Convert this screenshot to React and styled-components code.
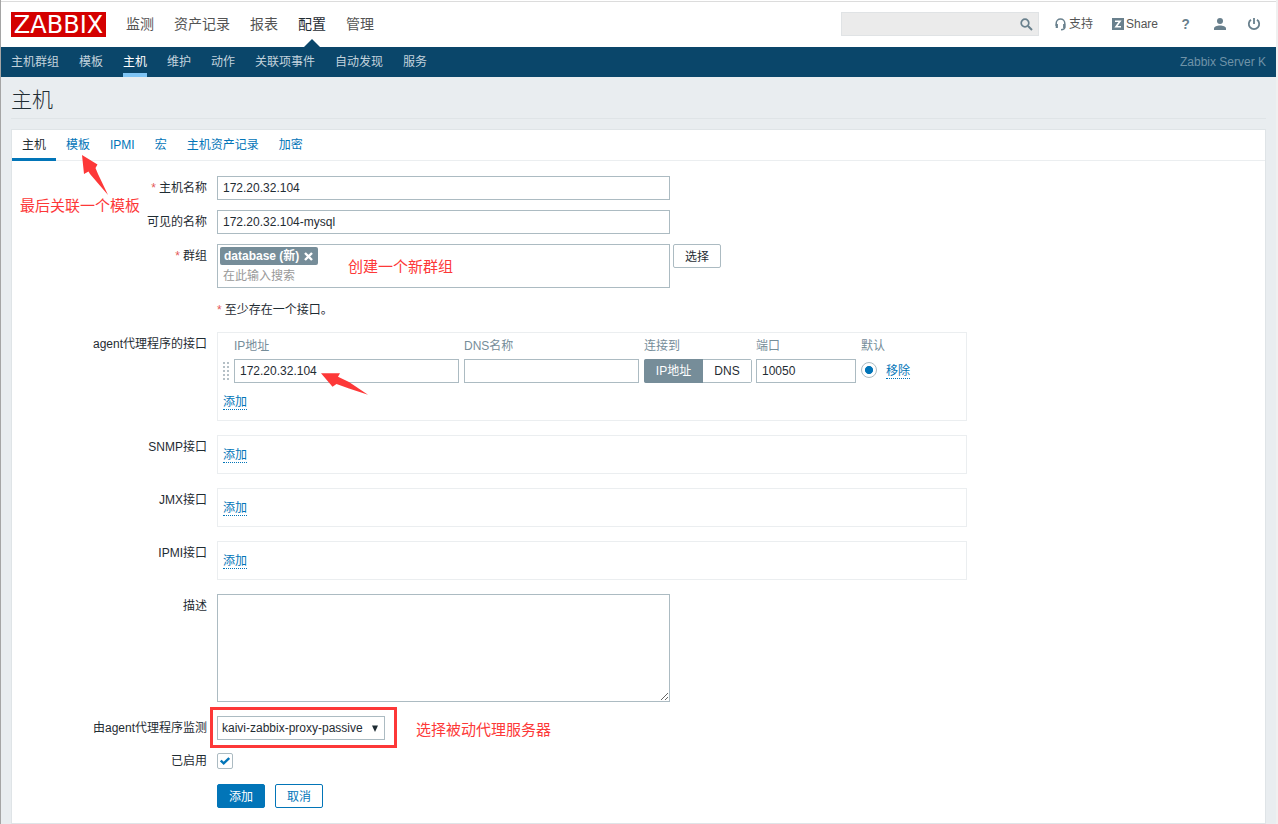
import React from 'react'
import styled, { createGlobalStyle } from 'styled-components'

const GlobalStyle = createGlobalStyle`
  * {
    box-sizing: border-box;
  }
  body {
    margin: 0;
    background: #e9edf0;
    color: #1f2c33;
    font-family: "Liberation Sans", "Noto Sans CJK SC", sans-serif;
    font-size: 12px;
  }
  input, textarea, button {
    font-family: inherit;
    font-size: 12px;
    color: #1f2c33;
  }
`

const Page = styled.div`
  position: relative;
  height: 824px;
  overflow: hidden;
  border-left: 1px solid #a5a5a5;
  border-right: 2px solid #f0f0f0;
`

const Header = styled.header`
  display: flex;
  align-items: flex-start;
  height: 47px;
  padding: 2px 15px 0 10px;
  background: #fff;
  box-shadow: inset 0 1px #fff, inset 0 2px #dcdcdc;
`

const Logo = styled.div`
  width: 95px;
  height: 25px;
  margin: 10px 20px 0 0;
  background: #d40000;
  color: #fff;
  font-family: "DejaVu Sans", sans-serif;
  font-size: 24px;
  line-height: 26px;
  text-align: center;
`

const MainNav = styled.nav`
  display: flex;
  gap: 20px;
  height: 45px;
`

const MainItem = styled.a`
  position: relative;
  font-size: 14px;
  line-height: 44px;
  color: ${props => props.$active ? '#1f2c33' : '#545454'};
  &::after {
    content: '';
    display: ${props => props.$active ? 'block' : 'none'};
    position: absolute;
    left: 6px;
    bottom: 0;
    border: 8px solid transparent;
    border-top: 0;
    border-bottom-color: #0a466a;
  }
`

const Search = styled.div`
  display: flex;
  align-items: center;
  justify-content: flex-end;
  width: 198px;
  height: 24px;
  margin: 10px 0 0 auto;
  padding-right: 5px;
  background: #ebebeb;
  border: 1px solid #e0e3e5;
`

const HeaderLink = styled.a`
  display: flex;
  align-items: center;
  gap: ${props => props.$gap || '3px'};
  height: 24px;
  margin: 10px 0 0 ${props => props.$space};
  color: #545454;
  line-height: 20px;
`

const ShareMark = styled.span`
  display: flex;
  width: 12px;
  height: 12px;
`

const Help = styled.span`
  width: 8px;
  color: #69808d;
  font-size: 15px;
  font-weight: bold;
  transform: scaleX(0.9);
`

const SubNav = styled.nav`
  display: flex;
  gap: 20px;
  height: 30px;
  padding: 0 10px;
  background: #0a466a;
`

const SubItem = styled.a`
  color: ${props => props.$active ? '#fff' : '#c3d3dd'};
  line-height: 31px;
  border-bottom: 4px solid ${props => props.$active ? '#7fc4f4' : 'transparent'};
  height: 30px;
`

const ServerName = styled.span`
  margin-left: auto;
  color: #6f93a8;
  line-height: 30px;
`

const Title = styled.h1`
  margin: 0 10px 10px;
  height: 42px;
  border-bottom: 1px solid #dfe4e7;
  font-size: 21px;
  font-weight: 300;
  font-family: "Noto Sans CJK SC", sans-serif;
  line-height: 43px;
`

const Panel = styled.main`
  margin: 0 10px;
  height: 695px;
  background: #fff;
  border: 1px solid #dfe4e7;
`

const Tabs = styled.div`
  display: flex;
  height: 31px;
  border-bottom: 1px solid #ebeef0;
`

const Tab = styled.a`
  height: 31px;
  padding: 0 10px;
  line-height: 31px;
  color: ${props => props.$active ? '#1f2c33' : '#0275b8'};
  border-bottom: 3px solid ${props => props.$active ? '#0275b8' : 'transparent'};
`

const Form = styled.form`
  padding-top: 15px;
`

const Row = styled.div`
  display: flex;
  align-items: flex-start;
  margin-bottom: ${props => props.$bottom || '10px'};
`

const Label = styled.label`
  width: 195px;
  margin-right: 10px;
  line-height: 24px;
  text-align: right;
`

const Star = styled.span`
  color: #e45959;
  margin-right: 3px;
`

const Input = styled.input`
  display: block;
  width: ${props => props.$width || '453px'};
  height: 24px;
  padding: 0 5px;
  border: 1px solid #acbbc2;
  outline: none;
`

const MultiSelect = styled.div`
  width: 453px;
  height: 44px;
  margin-right: 3px;
  padding: 2px;
  border: 1px solid #acbbc2;
`

const Chip = styled.span`
  display: flex;
  align-items: center;
  justify-content: space-between;
  width: 98px;
  height: 18px;
  padding: 0 5px 0 4px;
  border-radius: 2px;
  background: #768d99;
  color: #fff;
  font-weight: bold;
  line-height: 18px;
  white-space: nowrap;
`

const Placeholder = styled.div`
  padding-left: 3px;
  color: #999;
  line-height: 23px;
`

const Note = styled.div`
  line-height: 24px;
`

const Button = styled.button`
  width: 48px;
  height: 24px;
  margin-right: ${props => props.$right || 0};
  padding: 2px 0 0;
  border: 1px solid ${props => props.$kind ? '#0275b8' : '#acbbc2'};
  border-radius: 2px;
  background: ${props => props.$kind === 'primary' ? '#0275b8' : '#fff'};
  color: ${props => props.$kind === 'primary' ? '#fff' : props.$kind ? '#0275b8' : '#1f2c33'};
  line-height: 20px;
`

const Box = styled.div`
  width: 750px;
  height: ${props => props.$tall ? '89px' : '39px'};
  padding: ${props => props.$tall ? '0 5px' : '10px 5px'};
  border: 1px solid #ebeef0;
`

const InterfaceGrid = styled.div`
  display: grid;
  grid-template-columns: 11px 230px 180px 112px 105px 25px auto;
  grid-template-rows: 26px 24px;
  margin-bottom: 10px;
`

const Head = styled.span`
  color: #768d99;
  line-height: 26px;
`

const Handle = styled.span`
  width: 6px;
  height: 18px;
  margin-top: 3px;
  background: conic-gradient(from 270deg at 2px 2px, #b5c0c6 90deg, transparent 0) 0 0 / 4px 4px;
`

const Segments = styled.div`
  display: flex;
  width: 108px;
  height: 24px;
  border: 1px solid #acbbc2;
  border-radius: 2px;
  line-height: 22px;
  text-align: center;
`

const Segment = styled.span`
  flex: ${props => props.$active ? '0 0 59px' : '1'};
  margin: ${props => props.$active ? '-1px 0 -1px -1px' : 0};
  line-height: ${props => props.$active ? '24px' : '22px'};
  border-radius: ${props => props.$active ? '2px 0 0 2px' : 0};
  background: ${props => props.$active ? '#768d99' : '#fff'};
  color: ${props => props.$active ? '#fff' : '#1f2c33'};
`

const Radio = styled.span`
  width: 16px;
  height: 16px;
  margin-top: 3px;
  border: 1px solid #acbbc2;
  border-radius: 50%;
  background: radial-gradient(circle, #0275b8 3.7px, #fff 4.4px);
`

const Link = styled.a`
  display: inline-block;
  height: ${props => props.$inCell ? '16px' : '17px'};
  margin-top: ${props => props.$inCell ? '4px' : '0'};
  justify-self: start;
  color: #0275b8;
  line-height: ${props => props.$inCell ? '17px' : '19px'};
  border-bottom: 1px dotted #0275b8;
`

const TextArea = styled.textarea`
  display: block;
  width: 453px;
  height: 108px;
  padding: 5px;
  border: 1px solid #acbbc2;
  outline: none;
`

const Select = styled.div`
  display: flex;
  align-items: center;
  justify-content: space-between;
  width: 168px;
  height: 24px;
  padding: 0 6px 0 4px;
  border: 1px solid #acbbc2;
`

const CheckBox = styled.span`
  display: flex;
  align-items: center;
  justify-content: center;
  width: 16px;
  height: 16px;
  margin-top: 4px;
  border: 1px solid #acbbc2;
  border-radius: 2px;
`

const Actions = styled.div`
  display: flex;
  padding-left: 205px;
`

// red notes lying over the form
const Mark = styled.span`
  position: absolute;
  left: ${props => props.$left}px;
  top: ${props => props.$top}px;
  color: #fd3838;
  font-size: 15px;
  line-height: 20px;
  white-space: nowrap;
`

const Frame = styled.div`
  position: absolute;
  left: 209px;
  top: 707px;
  width: 187px;
  height: 41px;
  border: 3px solid #fd3838;
`

const Arrow = styled.svg`
  position: absolute;
  left: ${props => props.$left}px;
  top: ${props => props.$top}px;
`

const mainItems = ['监测', '资产记录', '报表', '配置', '管理']
const subItems = ['主机群组', '模板', '主机', '维护', '动作', '关联项事件', '自动发现', '服务']
const tabs = ['主机', '模板', 'IPMI', '宏', '主机资产记录', '加密']

function TopBar() {
  return (
    <Header>
      <Logo>ZABBIX</Logo>
      <MainNav>
        {mainItems.map(item => (
          <MainItem key={item} $active={item === '配置'}>{item}</MainItem>
        ))}
      </MainNav>
      <Search>
        <svg width="13" height="13" viewBox="0 0 13 13" fill="none" stroke="#69808d">
          <circle cx="5" cy="5" r="3.8" strokeWidth="1.7" />
          <path d="M8 8l4 4" strokeWidth="2" />
        </svg>
      </Search>
      <HeaderLink $space="16px" $gap="3px">
        <svg width="11" height="13" viewBox="0 0 11 13" fill="none" stroke="#69808d">
          <path d="M1.2 8V5.300a4.300 4.300 0 0 1 8.600 0V9c0 1.800-1 2.700-3.800 2.700" strokeWidth="1.5" />
          <path d="M1.8 6v4M9.200 6v4" strokeWidth="2.2" />
        </svg>
        支持
      </HeaderLink>
      <HeaderLink $space="19px" $gap="2px">
        <ShareMark>
          <svg width="12" height="12" viewBox="0 0 12 12">
            <path d="M0 0h12v12H0z" fill="#69808d" />
            <path d="M3 3.300h5L4 8.700h5" fill="none" stroke="#fff" strokeWidth="1.6" />
          </svg>
        </ShareMark>
        Share
      </HeaderLink>
      <HeaderLink $space="23px"><Help>?</Help></HeaderLink>
      <HeaderLink $space="25px">
        <svg width="12" height="12" viewBox="0 0 12 12" fill="#69808d">
          <circle cx="6" cy="3" r="3" />
          <path d="M0 12v-1.500C0 8.500 3 7.500 6 7.500s6 1 6 3V12z" />
        </svg>
      </HeaderLink>
      <HeaderLink $space="21px">
        <svg width="14" height="14" viewBox="0 0 14 14" fill="none" stroke="#69808d" strokeWidth="1.8">
          <path d="M4 2.700a5.200 5.200 0 1 0 6 0M7 1v6" />
        </svg>
      </HeaderLink>
    </Header>
  )
}

function AgentInterface() {
  return (
    <Box $tall>
      <InterfaceGrid>
        <span />
        <Head>IP地址</Head>
        <Head>DNS名称</Head>
        <Head>连接到</Head>
        <Head>端口</Head>
        <Head>默认</Head>
        <span />
        <Handle />
        <Input $width="225px" defaultValue="172.20.32.104" />
        <Input $width="175px" />
        <Segments>
          <Segment $active>IP地址</Segment>
          <Segment>DNS</Segment>
        </Segments>
        <Input $width="100px" defaultValue="10050" />
        <Radio />
        <Link $inCell>移除</Link>
      </InterfaceGrid>
      <Link>添加</Link>
    </Box>
  )
}

function App() {
  return (
    <>
      <GlobalStyle />
      <Page>
        <TopBar />
        <SubNav>
          {subItems.map(item => (
            <SubItem key={item} $active={item === '主机'}>{item}</SubItem>
          ))}
          <ServerName>Zabbix Server K</ServerName>
        </SubNav>
        <Title>主机</Title>
        <Panel>
          <Tabs>
            {tabs.map((tab, i) => (
              <Tab key={tab} $active={i === 0}>{tab}</Tab>
            ))}
          </Tabs>
          <Form>
            <Row>
              <Label><Star>*</Star>主机名称</Label>
              <Input defaultValue="172.20.32.104" />
            </Row>
            <Row>
              <Label>可见的名称</Label>
              <Input defaultValue="172.20.32.104-mysql" />
            </Row>
            <Row>
              <Label><Star>*</Star>群组</Label>
              <MultiSelect>
                <Chip>
                  database (新)
                  <svg width="9" height="9" viewBox="0 0 9 9" stroke="#fff" strokeWidth="2.4">
                    <path d="M1 1l7 7M8 1l-7 7" />
                  </svg>
                </Chip>
                <Placeholder>在此输入搜索</Placeholder>
              </MultiSelect>
              <Button type="button">选择</Button>
            </Row>
            <Row>
              <Label />
              <Note><Star>*</Star>至少存在一个接口。</Note>
            </Row>
            <Row $bottom="14px">
              <Label>agent代理程序的接口</Label>
              <AgentInterface />
            </Row>
            {['SNMP接口', 'JMX接口', 'IPMI接口'].map(name => (
              <Row key={name} $bottom="14px">
                <Label>{name}</Label>
                <Box><Link>添加</Link></Box>
              </Row>
            ))}
            <Row $bottom="14px">
              <Label>描述</Label>
              <TextArea />
            </Row>
            <Row $bottom="9px">
              <Label>由agent代理程序监测</Label>
              <Select>
                kaivi-zabbix-proxy-passive
                <svg width="6" height="7" viewBox="0 0 6 7">
                  <path d="M0 0.500h6L3 7z" fill="#1f2c33" />
                </svg>
              </Select>
            </Row>
            <Row $bottom="11px">
              <Label>已启用</Label>
              <CheckBox>
                <svg width="10" height="8" viewBox="0 0 10 8" fill="none" stroke="#0275b8" strokeWidth="2.4">
                  <path d="M0.800 3.500L3.700 6.300L9.200 1" />
                </svg>
              </CheckBox>
            </Row>
            <Actions>
              <Button type="button" $kind="primary" $right="10px">添加</Button>
              <Button type="button" $kind="outline">取消</Button>
            </Actions>
          </Form>
        </Panel>
        <Mark $left={19} $top={196}>最后关联一个模板</Mark>
        <Mark $left={347} $top={257}>创建一个新群组</Mark>
        <Mark $left={415} $top={720}>选择被动代理服务器</Mark>
        <Arrow $left={81} $top={155} width="27" height="40" viewBox="0 0 27 40">
          <path d="M0 0L15.500 9.500L13.500 13L16 19L26 40L8 19L6.500 16.500L2 19z" fill="#fd3838" />
        </Arrow>
        <Arrow $left={320} $top={372} width="47" height="24" viewBox="0 0 47 24">
          <path d="M0 1.300L19 1.300L17 4.700L28 10L47 22.700L28 16.500L15.500 12L11.500 14.700z" fill="#fd3838" />
        </Arrow>
        <Frame />
      </Page>
    </>
  )
}

export default App
